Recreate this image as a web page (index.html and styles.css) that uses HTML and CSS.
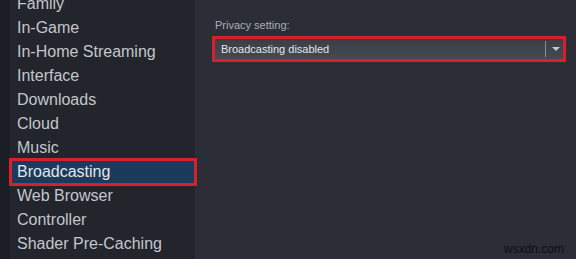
FILE: index.html
```html
<!DOCTYPE html>
<html lang="en">

<head>
  <meta charset="UTF-8">
  <meta name="viewport" content="width=device-width, initial-scale=1">
  <title>Settings - Broadcasting</title>
  <link rel="stylesheet" href="styles.css">
</head>

<body>

  <div class="sidebar">
    <ul class="menu">
      <li>Family</li>
      <li>In-Game</li>
      <li>In-Home Streaming</li>
      <li>Interface</li>
      <li>Downloads</li>
      <li>Cloud</li>
      <li>Music</li>
      <li class="active">Broadcasting</li>
      <li>Web Browser</li>
      <li>Controller</li>
      <li>Shader Pre-Caching</li>
    </ul>
  </div>

  <div class="content">
    <div class="label">Privacy setting:</div>
    <div class="highlight">
      <div class="select">
        <span class="value">Broadcasting disabled</span>
        <span class="arrow"></span>
      </div>
    </div>
  </div>

  <div class="watermark">wsxdn.com</div>

</body>

</html>
```

FILE: styles.css
```css
* {
  margin: 0;
  padding: 0;
  box-sizing: border-box;
}

html,
body {
  height: 100%;
  overflow: hidden;
}

body {
  background: #2b2e36;
  font-family: 'Liberation Sans', Arial, sans-serif;
  display: flex;
}

.sidebar {
  width: 195px;
  flex-shrink: 0;
  background: #22252b;
  border-left: 10px solid #1b1e24;
}

.menu {
  list-style: none;
  margin-top: -8px;
}

.menu li {
  font-size: 16px;
  line-height: 24px;
  color: #c3c7cd;
  padding-left: 7px;
  white-space: nowrap;
}

.menu li.active {
  position: relative;
  z-index: 1;
  margin: -2px -2px -2px -1px;
  padding-left: 5px;
  line-height: 22px;
  border: 3px solid #d7202b;
  background: #1c3a5b;
  color: #e2e6ea;
}

.content {
  flex: 1;
  padding: 18px 10px 0 20px;
}

.label {
  font-size: 11px;
  line-height: 14px;
  color: #a9aeb5;
  margin-bottom: 4px;
}

.highlight {
  margin-left: -3px;
  border: 3px solid #d7202b;
}

.select {
  height: 20px;
  display: flex;
  align-items: center;
  background: linear-gradient(#393e47, #444952);
  padding-left: 6px;
}

.value {
  flex: 1;
  font-size: 11px;
  line-height: 20px;
  color: #e4e6e9;
}

.arrow {
  width: 18px;
  height: 16px;
  border-left: 1px solid #8a8f96;
  display: flex;
  justify-content: center;
  align-items: center;
}

.arrow::after {
  content: "";
  border-left: 4px solid transparent;
  border-right: 4px solid transparent;
  border-top: 4px solid #c4c7cb;
  margin-left: 2px;
}

.watermark {
  position: absolute;
  right: 12px;
  bottom: 3px;
  font-size: 12px;
  line-height: 14px;
  color: #0d0d0d;
}
```
